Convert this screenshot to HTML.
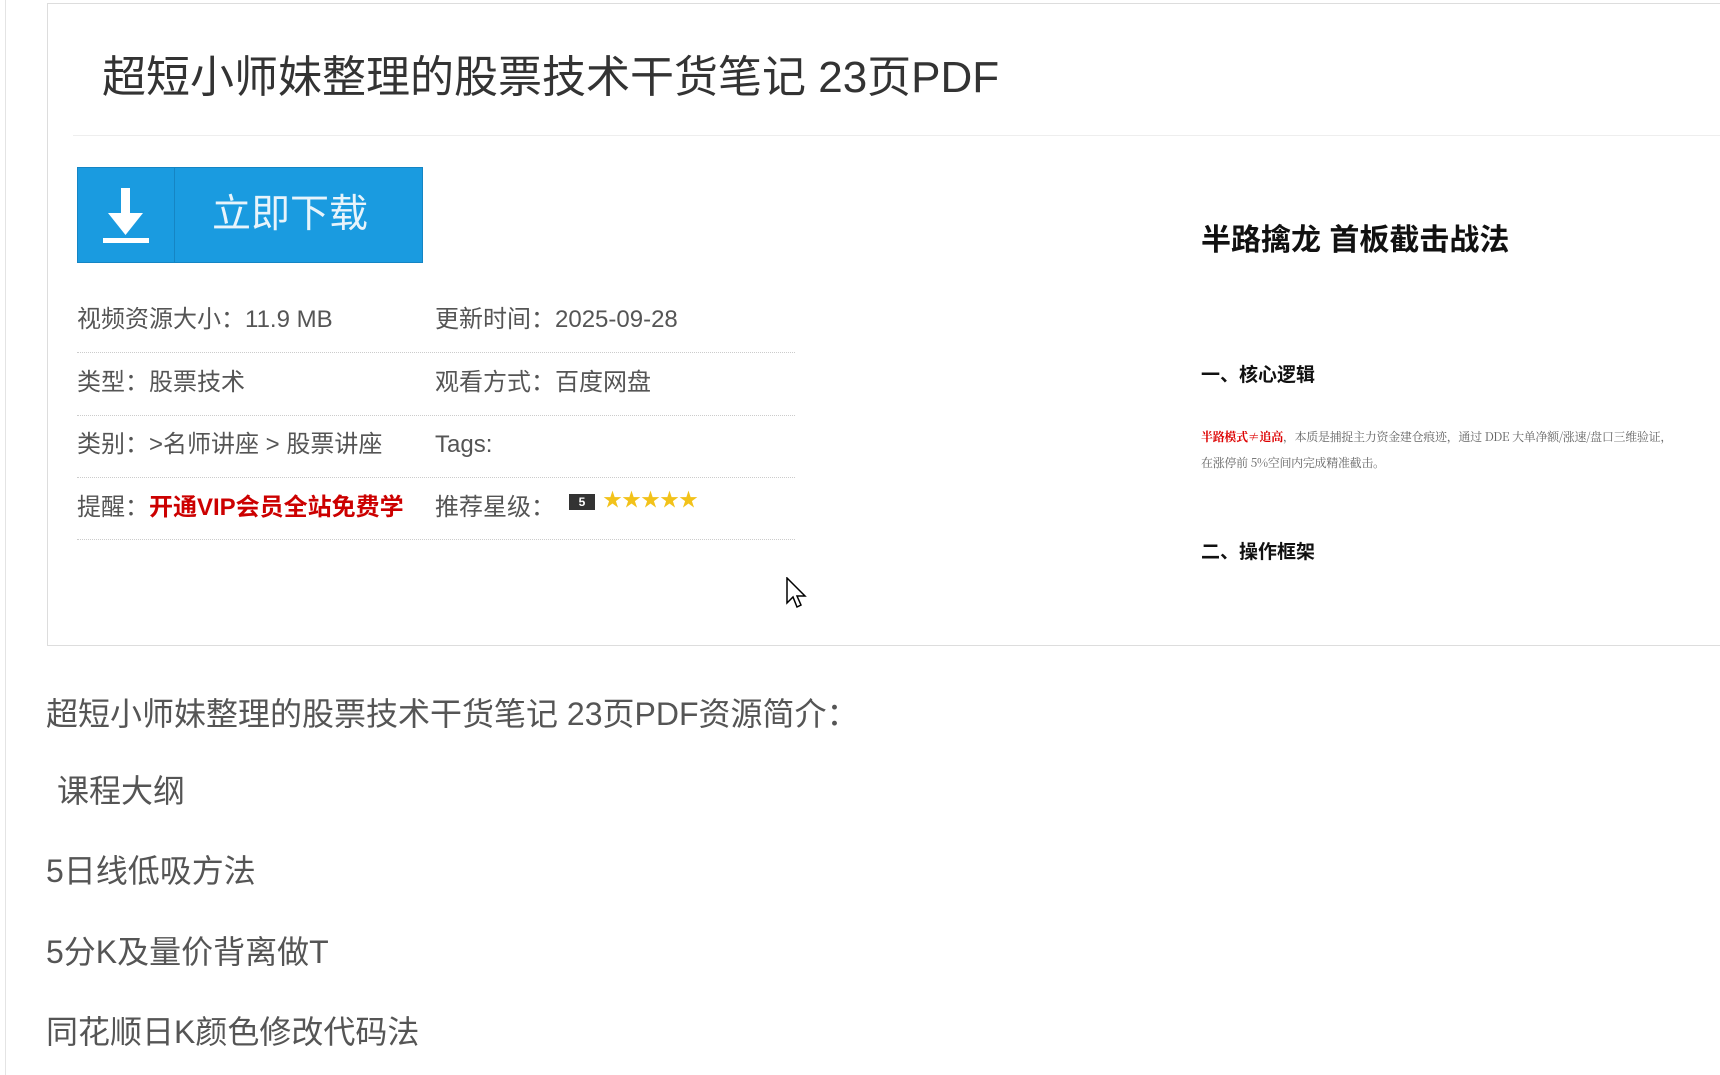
<!DOCTYPE html>
<html><head><meta charset="utf-8"><style>
*{margin:0;padding:0;box-sizing:border-box}
body{width:1720px;height:1075px;overflow:hidden;background:#fff;font-family:"Liberation Sans","Noto Sans CJK SC",sans-serif;position:relative;color:#555}
.a{position:absolute;white-space:nowrap;line-height:1}
.line{position:absolute;left:77px;width:718px;border-top:1px dotted #ccc}
</style></head><body>
<div style="position:absolute;left:5px;top:0;width:1px;height:1075px;background:#e4e4e4"></div>
<div style="position:absolute;left:47px;top:3px;width:1700px;height:643px;border:1px solid #ddd;border-right:none"></div>
<div class="a" style="left:102px;top:56px;font-size:44px;color:#333">超短小师妹整理的股票技术干货笔记 23页PDF</div>
<div style="position:absolute;left:73px;top:135px;width:1647px;height:1px;background:#eee"></div>
<div style="position:absolute;left:77px;top:167px;width:346px;height:96px;background:#1a9be0;border:1px solid #1485c4">
 <div style="position:absolute;left:96px;top:0;width:1px;height:94px;background:#1585c4"></div>
 <svg style="position:absolute;left:20px;top:15px" width="56" height="62" viewBox="0 0 56 62"><rect x="23" y="5" width="9" height="28" fill="#fff"/><polygon points="10,30 45,30 27.5,52" fill="#fff"/><rect x="5" y="55" width="46" height="5" fill="#fff"/></svg>
 <div class="a" style="left:134px;top:27px;font-size:39px;color:#e8f4fb">立即下载</div>
</div>
<div class="a" style="left:77px;top:308px;font-size:24px">视频资源大小：11.9 MB</div>
<div class="a" style="left:435px;top:308px;font-size:24px">更新时间：2025-09-28</div>
<div class="line" style="top:352px"></div>
<div class="a" style="left:77px;top:371px;font-size:24px">类型：股票技术</div>
<div class="a" style="left:435px;top:371px;font-size:24px">观看方式：百度网盘</div>
<div class="line" style="top:415px"></div>
<div class="a" style="left:77px;top:433px;font-size:24px">类别：&gt;名师讲座 &gt; 股票讲座</div>
<div class="a" style="left:435px;top:433px;font-size:24px">Tags:</div>
<div class="line" style="top:477px"></div>
<div class="a" style="left:77px;top:496px;font-size:24px">提醒：<b style="color:#c00">开通VIP会员全站免费学</b></div>
<div class="a" style="left:435px;top:496px;font-size:24px">推荐星级：</div>
<div style="position:absolute;left:569px;top:494px;width:26px;height:16px;background:#333;color:#fff;font:bold 12px 'Liberation Sans';text-align:center;line-height:16px">5</div>
<div class="a" style="left:603px;top:491px;font-size:19px;color:#f2c21a;letter-spacing:0px">★★★★★</div>
<div class="line" style="top:539px"></div>
<div class="a" style="left:1201px;top:226px;font-size:30px;font-weight:bold;color:#111">半路擒龙&nbsp;首板截击战法</div>
<div class="a" style="left:1201px;top:366px;font-size:19px;font-weight:bold;color:#111">一、核心逻辑</div>
<div class="a" style="left:1201px;top:431px;font-size:12px;color:#666;font-family:'Noto Serif CJK SC',serif;letter-spacing:-0.3px"><b style="color:#d00">半路模式≠追高</b>，本质是捕捉主力资金建仓痕迹，通过 DDE 大单净额/涨速/盘口三维验证，</div>
<div class="a" style="left:1201px;top:457px;font-size:12px;color:#666;font-family:'Noto Serif CJK SC',serif;letter-spacing:-0.3px">在涨停前 5%空间内完成精准截击。</div>
<div class="a" style="left:1201px;top:543px;font-size:19px;font-weight:bold;color:#111">二、操作框架</div>
<svg style="position:absolute;left:786px;top:577px" width="22" height="34" viewBox="0 0 22 34"><path d="M1 1 L1 26 L7 20 L11 30 L15 28 L11 19 L19 19 Z" fill="#fff" stroke="#000" stroke-width="1.5"/></svg>
<div class="a" style="left:46px;top:698px;font-size:32px">超短小师妹整理的股票技术干货笔记 23页PDF资源简介：</div>
<div class="a" style="left:57px;top:775px;font-size:32px">课程大纲</div>
<div class="a" style="left:46px;top:855px;font-size:32px">5日线低吸方法</div>
<div class="a" style="left:46px;top:936px;font-size:32px">5分K及量价背离做T</div>
<div class="a" style="left:46px;top:1016px;font-size:32px">同花顺日K颜色修改代码法</div>
</body></html>
